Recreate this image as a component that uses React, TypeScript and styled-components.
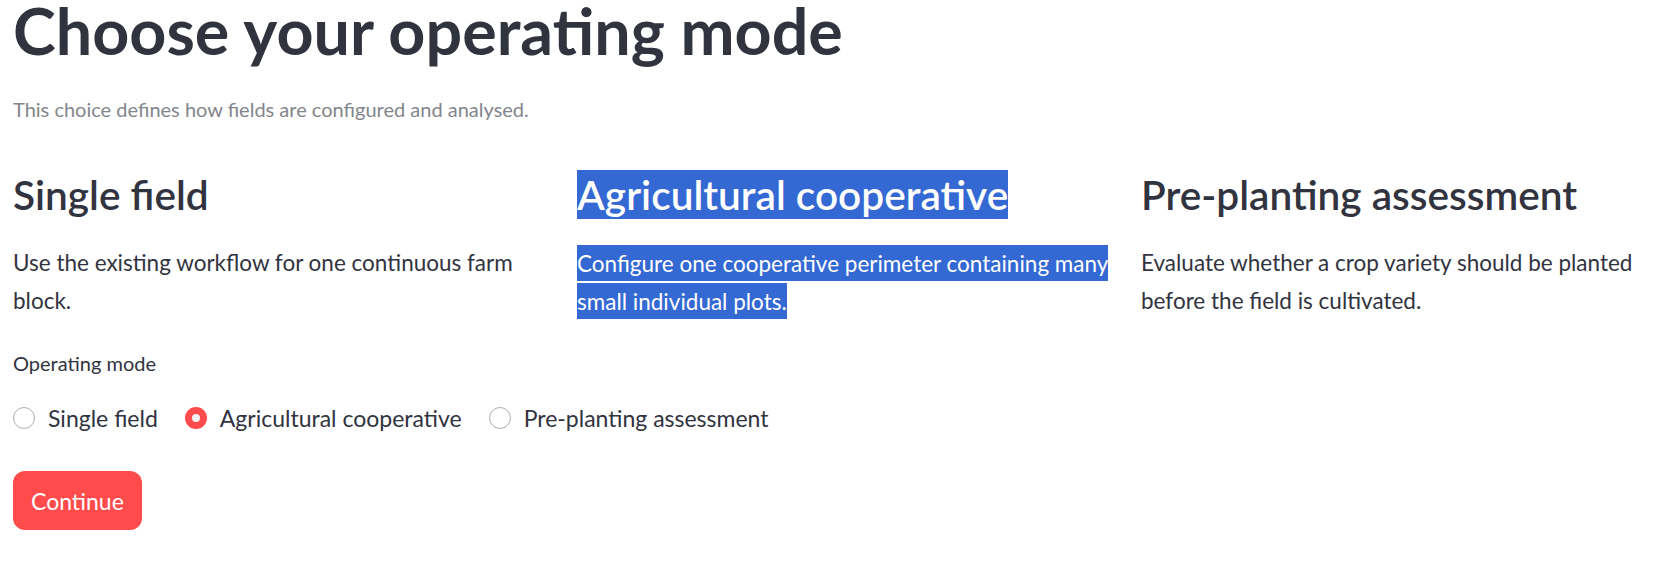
import React, { useState } from 'react';
import styled, { createGlobalStyle } from 'styled-components';

const GlobalStyle = createGlobalStyle`
  html, body {
    margin: 0;
    padding: 0;
    background: #ffffff;
    overflow: hidden;
  }
  body {
    font-family: Lato, "Noto Sans", "Liberation Sans", sans-serif;
    color: #31333f;
  }
`;

const Page = styled.main`
  padding: 0 0 0 13px;
  width: 1700px;
`;

const Title = styled.h1`
  margin: 0;
  font-size: 64.6px;
  font-weight: 700;
  line-height: 60px;
`;

const Caption = styled.p`
  margin: 33px 0 0;
  font-size: 20px;
  line-height: 1.6;
  color: #83858c;
`;

const Columns = styled.section`
  display: grid;
  grid-template-columns: repeat(3, 540px);
  column-gap: 24px;
  margin-top: 44px;
`;

const Column = styled.div`
  display: flex;
  flex-direction: column;
`;

const Heading = styled.h3`
  margin: 0;
  font-size: 40.6px;
  font-weight: 600;
  line-height: 51px;
  white-space: nowrap;
`;

const Body = styled.p`
  margin: 24px 0 0;
  font-size: 22.5px;
  line-height: 38.4px;
  white-space: nowrap;
`;

const Selected = styled.span<{ $pad?: number }>`
  background: #3468d3;
  color: #ffffff;
  padding: ${(p) => p.$pad ?? 0}px 0;
  -webkit-box-decoration-break: clone;
  box-decoration-break: clone;
`;

const FieldLabel = styled.div`
  margin-top: 26px;
  font-size: 20px;
  line-height: 33.6px;
`;

const RadioGroup = styled.div`
  display: flex;
  align-items: center;
  gap: 27px;
  margin-top: 19px;
  height: 38px;
`;

const RadioOption = styled.label`
  display: flex;
  align-items: center;
  gap: 13px;
  font-size: 23px;
  cursor: pointer;
`;

const RadioDot = styled.span<{ $checked: boolean }>`
  position: relative;
  box-sizing: border-box;
  width: 22px;
  height: 22px;
  border-radius: 50%;
  border: ${(p) => (p.$checked ? 'none' : '1.5px solid #adaeb3')};
  background: ${(p) => (p.$checked ? '#ff4b4b' : '#ffffff')};

  &::after {
    content: '';
    display: ${(p) => (p.$checked ? 'block' : 'none')};
    position: absolute;
    left: 50%;
    top: 50%;
    width: 8px;
    height: 8px;
    margin: -4px 0 0 -4px;
    border-radius: 50%;
    background: #f0f2f6;
  }
`;

const Button = styled.button`
  margin-top: 34px;
  height: 59px;
  padding: 0 18px;
  border: none;
  border-radius: 12px;
  background: #ff4b4b;
  color: #ffffff;
  font-family: inherit;
  font-size: 23px;
  cursor: pointer;
`;

const modes = [
  {
    key: 'single',
    title: 'Single field',
    text: ['Use the existing workflow for one continuous farm', 'block.'],
  },
  {
    key: 'coop',
    title: 'Agricultural cooperative',
    text: ['Configure one cooperative perimeter containing many ', 'small individual plots.'],
  },
  {
    key: 'pre',
    title: 'Pre-planting assessment',
    text: ['Evaluate whether a crop variety should be planted', 'before the field is cultivated.'],
  },
];

export default function App() {
  const [mode, setMode] = useState('coop');

  return (
    <Page>
      <GlobalStyle />
      <Title>Choose your operating mode</Title>
      <Caption>This choice defines how fields are configured and analysed.</Caption>

      <Columns>
        {modes.map((m) => (
          <Column key={m.key}>
            <Heading>{m.key === 'coop' ? <Selected>{m.title}</Selected> : m.title}</Heading>
            <Body>
              {m.key === 'coop' ? (
                <Selected $pad={4.5}>
                  {m.text[0]}
                  <br />
                  {m.text[1]}
                </Selected>
              ) : (
                <>
                  {m.text[0]}
                  <br />
                  {m.text[1]}
                </>
              )}
            </Body>
          </Column>
        ))}
      </Columns>

      <FieldLabel>Operating mode</FieldLabel>
      <RadioGroup>
        {modes.map((m) => (
          <RadioOption key={m.key} onClick={() => setMode(m.key)}>
            <RadioDot $checked={mode === m.key} />
            {m.title}
          </RadioOption>
        ))}
      </RadioGroup>

      <Button>Continue</Button>
    </Page>
  );
}
